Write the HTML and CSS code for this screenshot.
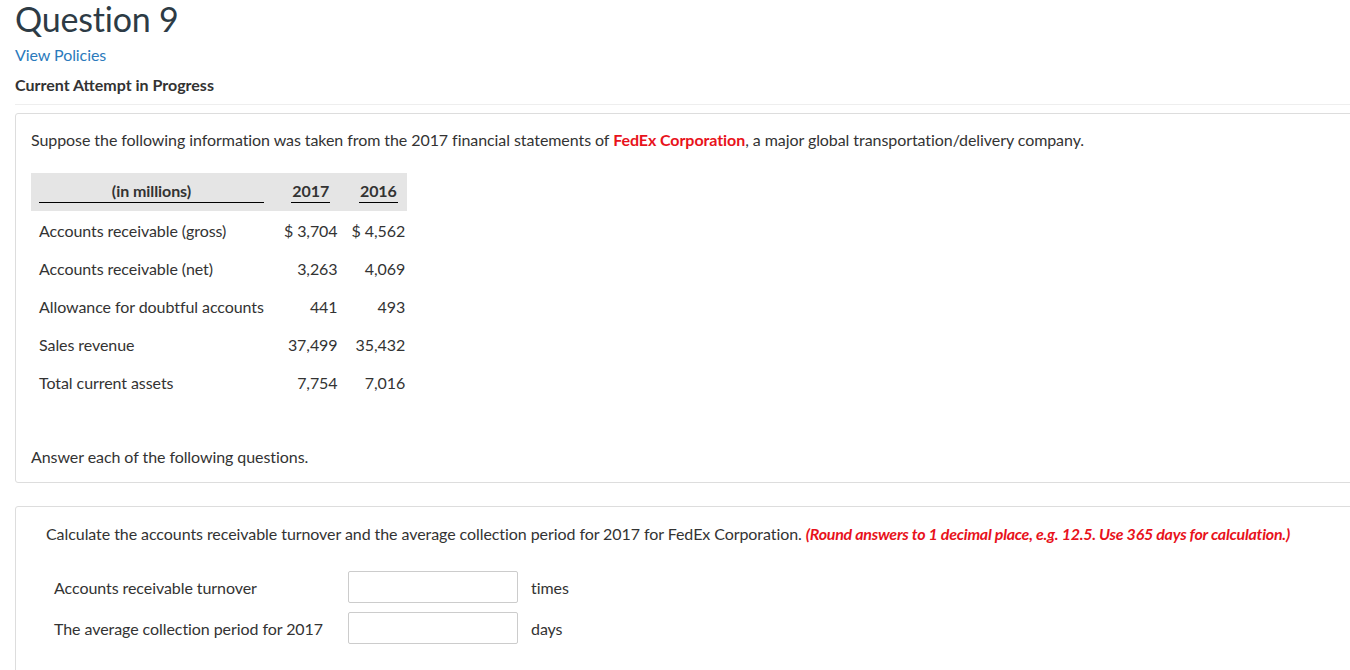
FILE: index.html
```html
<html>
  <head>
    <link rel="stylesheet" href="styles.css">
  </head>
  <body>
    <div class="page">
      <h1 class="title">Question 9</h1>
      <p class="policies"><a href="#">View Policies</a></p>
      <p class="attempt">Current Attempt in Progress</p>
      <div class="rule"></div>

      <div class="box intro">
        <p>Suppose the following information was taken from the 2017 financial statements of <b class="red">FedEx Corporation</b>, a major global transportation/delivery company.</p>
        <table class="data">
          <tr class="head">
            <th class="label"><span class="line">(in millions)</span></th>
            <th class="num"><span class="year">2017</span></th>
            <th class="num"><span class="year">2016</span></th>
          </tr>
          <tr>
            <td class="label">Accounts receivable (gross)</td>
            <td class="num">$ 3,704</td>
            <td class="num">$ 4,562</td>
          </tr>
          <tr>
            <td class="label">Accounts receivable (net)</td>
            <td class="num">3,263</td>
            <td class="num">4,069</td>
          </tr>
          <tr>
            <td class="label">Allowance for doubtful accounts</td>
            <td class="num">441</td>
            <td class="num">493</td>
          </tr>
          <tr>
            <td class="label">Sales revenue</td>
            <td class="num">37,499</td>
            <td class="num">35,432</td>
          </tr>
          <tr>
            <td class="label">Total current assets</td>
            <td class="num">7,754</td>
            <td class="num">7,016</td>
          </tr>
        </table>
        <p class="answer">Answer each of the following questions.</p>
      </div>

      <div class="box part">
        <p>Calculate the accounts receivable turnover and the average collection period for 2017 for FedEx Corporation. <i class="note">(Round answers to 1 decimal place, e.g. 12.5. Use 365 days for calculation.)</i></p>
        <div class="fields">
          <div class="field">
            <span class="flabel">Accounts receivable turnover</span>
            <input type="text" class="entry">
            <span class="unit">times</span>
          </div>
          <div class="field">
            <span class="flabel">The average collection period for 2017</span>
            <input type="text" class="entry">
            <span class="unit">days</span>
          </div>
        </div>
      </div>
    </div>
  </body>
</html>
```

FILE: styles.css
```css
html, body {
  margin: 0;
  overflow: hidden;
  background-color: #fff;
}

body {
  font-family: Lato, "Open Sans", sans-serif;
  font-size: 16px;
  letter-spacing: -0.07px;
  color: #333;
}

.page {
  padding-left: 15px;
}

p { margin: 0; line-height: 20px; }

.title {
  margin: 0;
  padding-top: 1px;
  font-size: 34px;
  font-weight: normal;
  line-height: 36px;
  letter-spacing: -0.2px;
  color: #2d3b45;
}

.policies { margin-top: 8px; }
.policies a { color: #2b7abc; text-decoration: none; }

.attempt {
  margin-top: 10px;
  font-weight: bold;
  letter-spacing: 0;
  color: #333;
}

.rule {
  margin-top: 9px;
  margin-right: -100px;
  border-top: 1px solid #eee;
}

.box {
  border: 1px solid #ddd;
  border-radius: 3px;
  margin-right: -100px;
}

.intro {
  margin-top: 8px;
  padding: 16px 15px 15px 15px;
}

.red { color: #e8121b; }

table.data {
  border-collapse: collapse;
  margin-top: 23px;
  font-size: 16px;
  color: #333;
}

table.data td, table.data th {
  height: 38px;
  padding: 0 2px 0 12px;
  white-space: nowrap;
}

table.data td.label, table.data th.label {
  text-align: left;
  padding: 0 8px 0 8px;
}

tr.head th { background-color: #e5e5e5; font-weight: bold; }

.line {
  display: block;
  text-align: center;
  border-bottom: 1px solid #000;
  padding-bottom: 1px;
  line-height: 20px;
}

.year {
  display: inline-block;
  border-bottom: 1px solid #000;
  padding: 0 1px 1px 1px;
  line-height: 20px;
}

th.num { text-align: center; }
td.num { text-align: right; }

.answer { margin-top: 46px; }

.part {
  margin-top: 23px;
  padding: 17px 30px 30px 30px;
}

.note {
  color: #e8121b;
  font-weight: bold;
  letter-spacing: -0.25px;
}

.fields { margin-top: 27px; padding-left: 8px; }

.field {
  display: flex;
  align-items: center;
  margin-bottom: 9px;
}

.flabel { width: 294px; }

.entry {
  width: 170px;
  height: 32px;
  box-sizing: border-box;
  border: 1px solid #ccc;
  border-radius: 2px;
  margin: 0;
}

.unit { margin-left: 13px; }
```
